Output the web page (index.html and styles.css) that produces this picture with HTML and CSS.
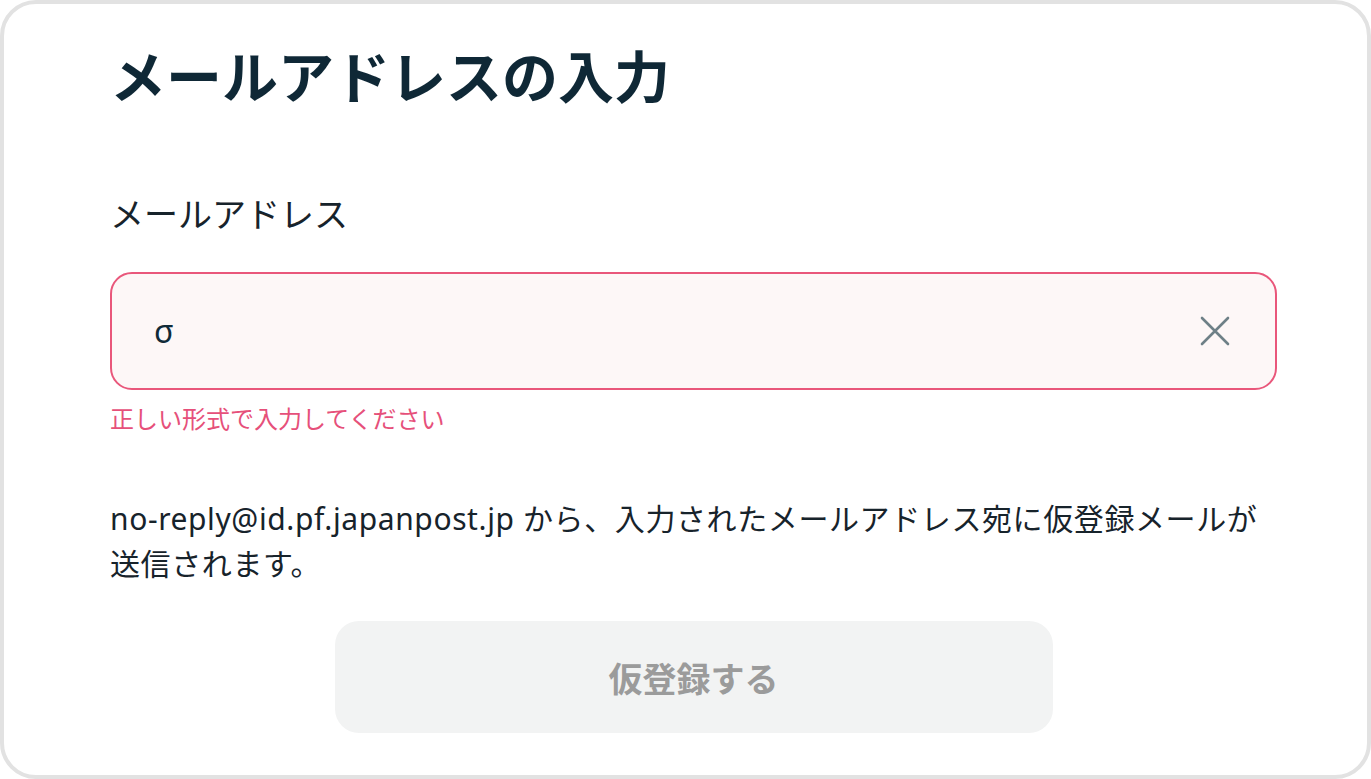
FILE: index.html
```html
<!DOCTYPE html>
<html lang="ja">
<head>
<meta charset="utf-8">
<title>メールアドレスの入力</title>
<link rel="stylesheet" href="styles.css">
</head>
<body>
<div class="frame">
  <main class="content">
    <h1 class="title">メールアドレスの入力</h1>
    <label class="label" for="email">メールアドレス</label>
    <div class="field is-error">
      <span class="field-value" id="email">σ</span>
      <button class="clear" type="button" aria-label="クリア">
        <svg width="30" height="30" viewBox="0 0 30 30" aria-hidden="true">
          <path d="M2 2 L28 28 M28 2 L2 28" stroke="currentColor" stroke-width="2.6" stroke-linecap="round" fill="none"/>
        </svg>
      </button>
    </div>
    <p class="error-msg">正しい形式で入力してください</p>
    <p class="note">no-reply@id.pf.japanpost.jp から、入力されたメールアドレス宛に仮登録メールが送信されます。</p>
    <div class="actions">
      <button class="submit" type="button" disabled>仮登録する</button>
    </div>
  </main>
</div>
</body>
</html>
```

FILE: styles.css
```css
* {
  box-sizing: border-box;
}

html, body {
  margin: 0;
  padding: 0;
  background: #ffffff;
}

body {
  font-family: "Noto Sans", "Noto Sans CJK JP", sans-serif;
  color: #17232b;
}

.frame {
  width: 1371px;
  height: 779px;
  border: 4px solid #e2e2e2;
  border-radius: 36px;
  background: #ffffff;
  overflow: hidden;
}

.content {
  padding: 31px 90px 0 106px;
  display: flex;
  flex-direction: column;
}

.title {
  margin: 0;
  font-family: "Noto Sans CJK JP", sans-serif;
  font-size: 56px;
  line-height: 78px;
  font-weight: 700;
  color: #0f2836;
}

.label {
  display: block;
  margin-top: 75px;
  font-family: "Noto Sans CJK JP", sans-serif;
  font-size: 34px;
  line-height: 50px;
  font-weight: 400;
  color: #17232b;
}

.field {
  margin-top: 34px;
  height: 118px;
  display: flex;
  align-items: center;
  justify-content: space-between;
  padding: 0 44px 0 42px;
  border: 2px solid #e9577b;
  border-radius: 22px;
  background: #fdf7f7;
}

.field-value {
  font-family: "Noto Sans", sans-serif;
  font-size: 32px;
  color: #102a38;
  line-height: 40px;
}

.clear {
  display: flex;
  align-items: center;
  justify-content: center;
  width: 32px;
  height: 32px;
  padding: 0;
  border: 0;
  background: transparent;
  color: #6e8087;
}

.error-msg {
  margin: 10px 0 0;
  font-family: "Noto Sans CJK JP", sans-serif;
  font-size: 24px;
  line-height: 36px;
  color: #e6507a;
}

.note {
  margin: 60px 0 0;
  font-size: 30px;
  line-height: 45px;
  letter-spacing: 0.6px;
  color: #17232b;
}

.actions {
  margin-top: 35px;
  display: flex;
  justify-content: center;
}

.submit {
  width: 718px;
  height: 112px;
  border: 0;
  border-radius: 24px;
  background: #f2f3f3;
  font-family: "Noto Sans CJK JP", sans-serif;
  font-size: 34px;
  font-weight: 700;
  color: #9b9b9b;
}
```
